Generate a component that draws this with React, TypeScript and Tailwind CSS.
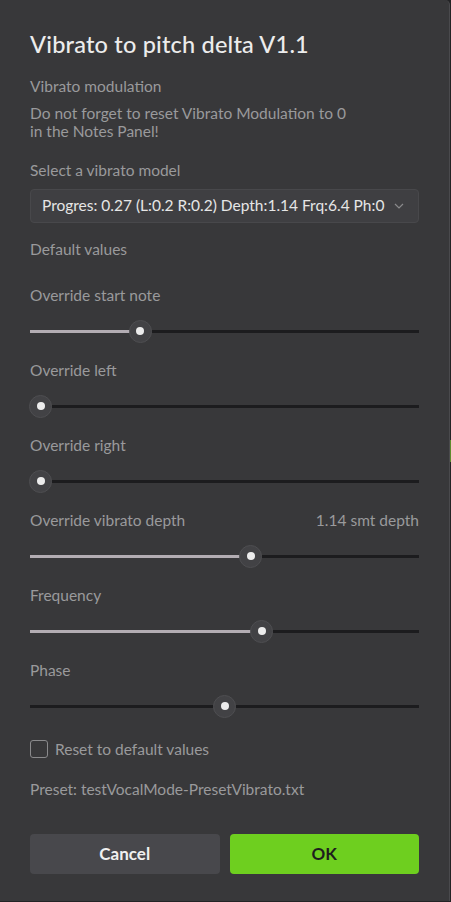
import * as React from "react";

const SLIDERS = [
  { label: "Override start note", pct: 28.3, fill: true },
  { label: "Override left", pct: 2.8, fill: true },
  { label: "Override right", pct: 2.8, fill: true },
  { label: "Override vibrato depth", pct: 56.8, fill: true, value: "1.14 smt depth" },
  { label: "Frequency", pct: 59.6, fill: true },
  { label: "Phase", pct: 50.1, fill: false },
];

function Slider({ pct, fill }: { pct: number; fill: boolean }) {
  return (
    <div className="relative h-6 flex items-center">
      <div className="h-[3px] w-full bg-[#1c1c1e]" />
      {fill && <div className="absolute left-0 h-[3px] bg-[#b3adb3]" style={{ width: `${pct}%` }} />}
      <div
        className="absolute w-[23px] h-[23px] -ml-[11.5px] rounded-full bg-[#424245] border border-[#4e4e51] flex items-center justify-center"
        style={{ left: `${pct}%` }}
      >
        <div className="w-[8px] h-[8px] rounded-full bg-[#ececec]" />
      </div>
    </div>
  );
}

export default function App() {
  return (
    <div className="flex w-[451px] h-[902px] bg-[#232325]" style={{ fontFamily: "Lato, 'Noto Sans', sans-serif" }}>
      <div className="w-[450px] h-[901px] bg-[#38383a] border-r border-[#4a4a4d] rounded-tr-[5px] flex flex-col px-[30px] pt-[29px]">
        <h1 className="text-[23.5px] leading-[30px] text-[#ececec] font-medium tracking-[0.2px]">Vibrato to pitch delta V1.1</h1>
        <div className="mt-[18px] text-[15.5px] leading-[18px] text-[#9a9a9c]">Vibrato modulation</div>
        <div className="mt-[9px] text-[15.5px] leading-[18px] text-[#9a9a9c]">
          Do not forget to reset Vibrato Modulation to 0
          <br />
          in the Notes Panel!
        </div>
        <div className="mt-[21px] text-[15.5px] leading-[18px] text-[#9a9a9c]">Select a vibrato model</div>
        <div className="mt-[10px] h-[34px] rounded-[4px] bg-[#3f3f42] border border-[#48484b] flex items-center pl-[11px] pr-[14px]">
          <span className="flex-1 text-[15.5px] text-[#e6e6e6] whitespace-nowrap overflow-hidden">
            Progres: 0.27 (L:0.2 R:0.2) Depth:1.14 Frq:6.4 Ph:0
          </span>
          <svg width="10" height="6" viewBox="0 0 10 6" className="ml-2">
            <path d="M1 1l4 4 4-4" fill="none" stroke="#8a8a8c" strokeWidth="1.2" />
          </svg>
        </div>
        <div className="mt-[17px] text-[15.5px] leading-[18px] text-[#9a9a9c]">Default values</div>
        {SLIDERS.map((s, i) => (
          <div key={s.label} className={i === 0 ? "mt-[28px]" : "mt-[18px]"}>
            <div className="flex justify-between text-[15.5px] leading-[18px] text-[#9a9a9c]">
              <span>{s.label}</span>
              {s.value && <span>{s.value}</span>}
            </div>
            <div className="mt-[15px]">
              <Slider pct={s.pct} fill={s.fill} />
            </div>
          </div>
        ))}
        <label className="mt-[22px] flex items-center gap-[7px] text-[15.5px] leading-[18px] text-[#9a9a9c]">
          <span className="w-[18px] h-[18px] rounded-[3px] border border-[#8a8a8c]" />
          Reset to default values
        </label>
        <div className="mt-[22px] text-[15.5px] leading-[18px] text-[#9a9a9c]">Preset: testVocalMode-PresetVibrato.txt</div>
        <div className="mt-[36px] flex gap-[10px]">
          <button className="flex-1 h-[40px] rounded-[4px] bg-[#48484c] text-[#f0f0f0] text-[17px] font-bold">Cancel</button>
          <button className="flex-1 h-[40px] rounded-[4px] bg-[#6ecf1f] text-[#1e1e1e] text-[17px] font-bold">OK</button>
        </div>
      </div>
      <div className="w-[1px] flex flex-col">
        <div className="h-[440px]" />
        <div className="h-[22px] bg-[#5e8a2e]" />
      </div>
    </div>
  );
}
